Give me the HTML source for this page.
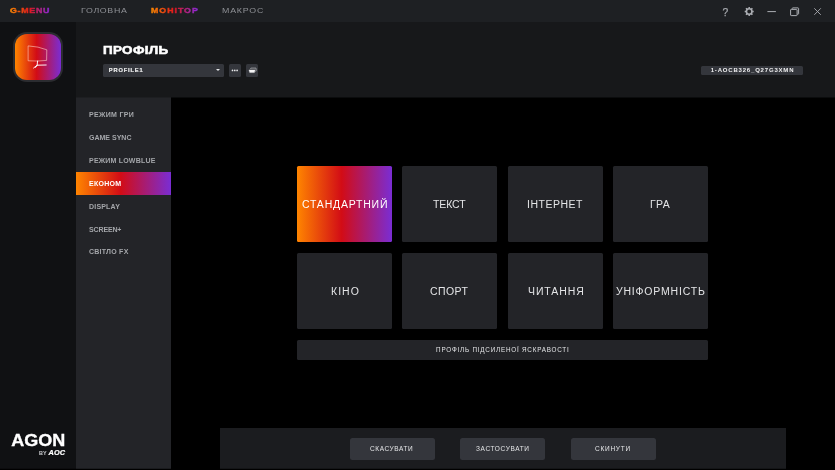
<!DOCTYPE html>
<html lang="uk">
<head>
<meta charset="utf-8">
<title>G-Menu</title>
<style>
*{box-sizing:border-box;margin:0;padding:0}
html,body{width:835px;height:470px;overflow:hidden;background:#000}
body{position:relative;font-family:"Liberation Sans","DejaVu Sans",sans-serif;color:#c8c9cc}
.abs{position:absolute}
.tx{position:absolute;white-space:nowrap;display:inline-block}
#topbar{left:0;top:0;width:835px;height:22px;background:#1e2023}
#topbar .t{top:0;height:22px;line-height:22px;font-size:8px;letter-spacing:0.9px;color:#8f9196;transform:scaleX(1.1);transform-origin:0 50%}
#leftbar{left:0;top:22px;width:76px;height:448px;background:#101113}
#header{left:76px;top:22px;width:759px;height:76px;background:#17181a}
#subbar{left:76px;top:98px;width:95px;height:372px;background:#232428}
#main{left:171px;top:98px;width:664px;height:372px;background:#000}
.mi{left:88.5px;height:23px;line-height:23px;font-size:6.4px;font-weight:bold;letter-spacing:0.6px;color:#a4a6aa;transform:scaleX(1.1);transform-origin:0 50%}
.tile{position:absolute;width:95px;height:76px;background:#232428;border-radius:1.5px}
.tl{height:76px;line-height:77.2px;color:#e4e5e7;font-size:10px;letter-spacing:0.8px;transform:scaleX(1.05);transform-origin:0 50%}
.btn{position:absolute;top:438px;width:85px;height:22px;background:#34363c;border-radius:2.5px}
.bl{top:438px;height:22px;line-height:22px;color:#e4e5e7;font-size:6.5px;letter-spacing:0.6px}
.grad{background:linear-gradient(90deg,#ff8500 0%,#d20c16 47%,#7a2dd4 100%)}
.gtext{background:linear-gradient(90deg,#ff8a00 0%,#e0181b 48%,#8a2be2 100%);-webkit-background-clip:text;background-clip:text;color:transparent !important;-webkit-text-stroke:0.45px transparent}
</style>
</head>
<body>
<div id="w" style="position:absolute;left:0;top:0;width:835px;height:470px;will-change:transform">
<div id="topbar" class="abs">
  <span id="gmenu" class="tx t gtext" style="left:9.7px;font-weight:bold;font-size:7.7px;transform:scaleX(1.15);letter-spacing:0.62px">G-MENU</span>
  <span id="nav1" class="tx t" style="left:80.5px;letter-spacing:0.62px">ГОЛОВНА</span>
  <span id="nav2" class="tx t gtext" style="left:151px;font-weight:bold">МОНІТОР</span>
  <span id="nav3" class="tx t" style="left:222px;letter-spacing:0.74px">МАКРОС</span>
  <svg class="abs" style="left:715px;top:0" width="120" height="22" viewBox="0 0 120 22" fill="none" stroke="#acaeb3" stroke-width="1">
    <text x="7.6" y="16" font-family="Liberation Sans, sans-serif" font-size="10.3" fill="#a2a4a9" stroke="#a2a4a9" stroke-width="0.25">?</text>
    <g transform="translate(34.2 11.5)">
      <circle r="2.75" stroke-width="1.6"/>
      <g stroke-width="1.5"><path d="M0-4.5V-3M0 4.5V3M-4.5 0H-3M4.5 0H3M-3.18-3.18L-2.1-2.1M3.18 3.18L2.1 2.1M-3.18 3.18L-2.1 2.1M3.18-3.18L2.1-2.1"/></g>
    </g>
    <path d="M52.4 11.6H60.9" stroke-width="1"/>
    <rect x="75.6" y="9.4" width="6.5" height="6.2" rx="0.6" stroke-width="1"/>
    <path d="M77.2 9.2V8.5Q77.2 7.9 77.8 7.9H83Q83.6 7.9 83.6 8.5V13.6Q83.6 14.2 83 14.2H82.4" stroke-width="1"/>
    <path d="M99.3 8.3L105.8 14.8M105.8 8.3L99.3 14.8" stroke-width="0.9"/>
  </svg>
</div>

<div id="leftbar" class="abs">
  <div class="abs" style="left:13px;top:10px;width:50px;height:50px;border-radius:14px;background:#2b2c30"></div>
  <div class="abs grad" style="left:15px;top:12px;width:46px;height:46px;border-radius:12px"></div>
  <svg class="abs" style="left:13px;top:10px" width="50" height="50" viewBox="0 0 50 50" fill="none" stroke="#fff" stroke-linejoin="round" stroke-linecap="round">
    <path d="M15.5 13.9 Q25.5 14.4 33.8 17.8 L33.6 28.4 Q25 29.5 15.5 28.8 Z" stroke="#ffd0c4" stroke-width="0.6"/>
    <path d="M24.6 29 L24.1 33.2 M20.6 36 L24.1 33.2 L33.2 33 M24.1 33.2 L22.6 35.4" stroke-width="0.95"/>
  </svg>
  <svg class="abs" style="left:10px;top:408px" width="60" height="32" viewBox="0 0 60 32">
    <text x="1.2" y="16.3" font-family="Liberation Sans, sans-serif" font-weight="bold" font-size="17" fill="#fff" stroke="#fff" stroke-width="0.35" textLength="54" lengthAdjust="spacingAndGlyphs">AGON</text>
    <text x="29" y="24.5" font-family="Liberation Sans, sans-serif" font-weight="bold" font-size="4.5" fill="#cfd0d3" textLength="7.6" lengthAdjust="spacingAndGlyphs">BY</text>
    <text x="38.6" y="24.6" font-family="Liberation Sans, sans-serif" font-weight="bold" font-style="italic" font-size="7.3" fill="#fff" stroke="#fff" stroke-width="0.2" textLength="16.4" lengthAdjust="spacingAndGlyphs">AOC</text>
  </svg>
</div>

<div id="header" class="abs">
  <span id="title" class="tx" style="left:27.3px;top:21.4px;font-size:11.4px;line-height:14px;font-weight:bold;color:#fff;letter-spacing:0.28px;-webkit-text-stroke:0.55px #fff;transform:scaleX(1.18);transform-origin:0 50%">ПРОФІЛЬ</span>
  <div class="abs" style="left:27px;top:42px;width:121.3px;height:12.6px;background:#34363c;border-radius:1.5px"></div>
  <span id="prof" class="tx" style="left:32.8px;top:42px;height:12.6px;line-height:12.9px;font-size:5.7px;font-weight:bold;letter-spacing:0.85px;color:#eceded;-webkit-text-stroke:0.2px #eceded">PROFILE1</span>
  <div class="abs" style="left:140.1px;top:47.3px;width:0;height:0;border-left:2.05px solid transparent;border-right:2.05px solid transparent;border-top:2.7px solid #e4e5e7"></div>
  <div class="abs" style="left:153px;top:42px;width:12.1px;height:12.6px;background:#34363c;border-radius:1.5px"></div>
  <svg class="abs" style="left:153px;top:42px" width="13" height="13" viewBox="0 0 13 13" fill="#e8e9ea"><circle cx="3.5" cy="6.4" r="0.85"/><circle cx="5.8" cy="6.4" r="0.85"/><circle cx="8.1" cy="6.4" r="0.85"/></svg>
  <div class="abs" style="left:170px;top:42px;width:12.4px;height:12.6px;background:#34363c;border-radius:1.5px"></div>
  <svg class="abs" style="left:170px;top:42px" width="13" height="13" viewBox="0 0 13 13"><path d="M4.7 5V4.5Q4.7 4.1 5.1 4.1H9.7Q10.1 4.1 10.1 4.5V7Q10.1 7.4 9.7 7.4H9.5" fill="none" stroke="#e8e9ea" stroke-width="0.55"/><path d="M3 5.9H9L8.4 8.6H3.7Z" fill="#f4f4f5" stroke="#f4f4f5" stroke-width="0.35" stroke-linejoin="round"/></svg>
  <div class="abs" style="left:625px;top:43.6px;width:102px;height:9.4px;background:#34363c;border-radius:1.5px"></div>
  <span id="badge" class="tx" style="left:634.7px;top:43.6px;height:9.4px;line-height:9.8px;font-size:6px;font-weight:bold;letter-spacing:0.81px;color:#f0f0f1">1-AOCB326_Q27G3XMN</span>
</div>

<div id="subbar" class="abs"></div>
<div class="abs" style="left:76px;top:97px;width:95px;height:1px;background:#1d1e21"></div>
<div class="abs" style="left:171px;top:97px;width:664px;height:1px;background:#0b0c0d"></div>
<div class="abs grad" style="left:76px;top:172px;width:95px;height:23px"></div>
<span id="m1" class="tx mi" style="top:103.3px;letter-spacing:0.29px">РЕЖИМ ГРИ</span>
<span id="m2" class="tx mi" style="top:126.4px;letter-spacing:-0.01px">GAME SYNC</span>
<span id="m3" class="tx mi" style="top:149.1px;letter-spacing:0.17px">РЕЖИМ LOWBLUE</span>
<span id="m4" class="tx mi" style="top:172px;color:#fff;left:89.2px;letter-spacing:0.22px">ЕКОНОМ</span>
<span id="m5" class="tx mi" style="top:194.6px;letter-spacing:0.16px">DISPLAY</span>
<span id="m6" class="tx mi" style="top:217.5px;letter-spacing:-0.14px">SCREEN+</span>
<span id="m7" class="tx mi" style="top:240.3px;letter-spacing:0.20px">СВІТЛО FX</span>

<div id="main" class="abs"></div>

<div class="tile grad" style="left:297px;top:166px"></div>
<div class="tile" style="left:402px;top:166px"></div>
<div class="tile" style="left:508px;top:166px"></div>
<div class="tile" style="left:613px;top:166px"></div>
<div class="tile" style="left:297px;top:253px"></div>
<div class="tile" style="left:402px;top:253px"></div>
<div class="tile" style="left:508px;top:253px"></div>
<div class="tile" style="left:613px;top:253px"></div>
<span id="t1" class="tx tl" style="left:302.1px;top:166px;color:#fff;letter-spacing:0.75px">СТАНДАРТНИЙ</span>
<span id="t2" class="tx tl" style="left:433.2px;top:166px;letter-spacing:-0.10px">ТЕКСТ</span>
<span id="t3" class="tx tl" style="left:526.6px;top:166px;letter-spacing:0.49px">ІНТЕРНЕТ</span>
<span id="t4" class="tx tl" style="left:650px;top:166px;letter-spacing:0.35px">ГРА</span>
<span id="t5" class="tx tl" style="left:330.6px;top:253px;letter-spacing:0.98px">КІНО</span>
<span id="t6" class="tx tl" style="left:430px;top:253px;letter-spacing:0.38px">СПОРТ</span>
<span id="t7" class="tx tl" style="left:527.6px;top:253px;letter-spacing:0.85px">ЧИТАННЯ</span>
<span id="t8" class="tx tl" style="left:616.2px;top:253px;letter-spacing:0.76px">УНІФОРМНІСТЬ</span>
<div class="abs" style="left:297px;top:340px;width:411px;height:20px;background:#232428;border-radius:1.5px"></div>
<span id="bar" class="tx" style="left:436.1px;top:340px;height:20px;line-height:19.6px;font-size:6.3px;letter-spacing:0.79px;color:#e4e5e7">ПРОФІЛЬ ПІДСИЛЕНОЇ ЯСКРАВОСТІ</span>

<div class="abs" style="left:220px;top:428px;width:566px;height:42px;background:#1b1c1f"></div>
<div class="btn" style="left:350px"></div>
<div class="btn" style="left:460px"></div>
<div class="btn" style="left:571px"></div>
<span id="b1" class="tx bl" style="left:370px">СКАСУВАТИ</span>
<span id="b2" class="tx bl" style="left:476px;letter-spacing:0.64px">ЗАСТОСУВАТИ</span>
<span id="b3" class="tx bl" style="left:595px;letter-spacing:0.75px">СКИНУТИ</span>
<div class="abs" style="left:0;top:469px;width:835px;height:1px;background:#000"></div>
<div class="abs" style="left:0;top:468px;width:835px;height:1px;background:rgba(0,0,0,0.25)"></div>
</div>
</body>
</html>
